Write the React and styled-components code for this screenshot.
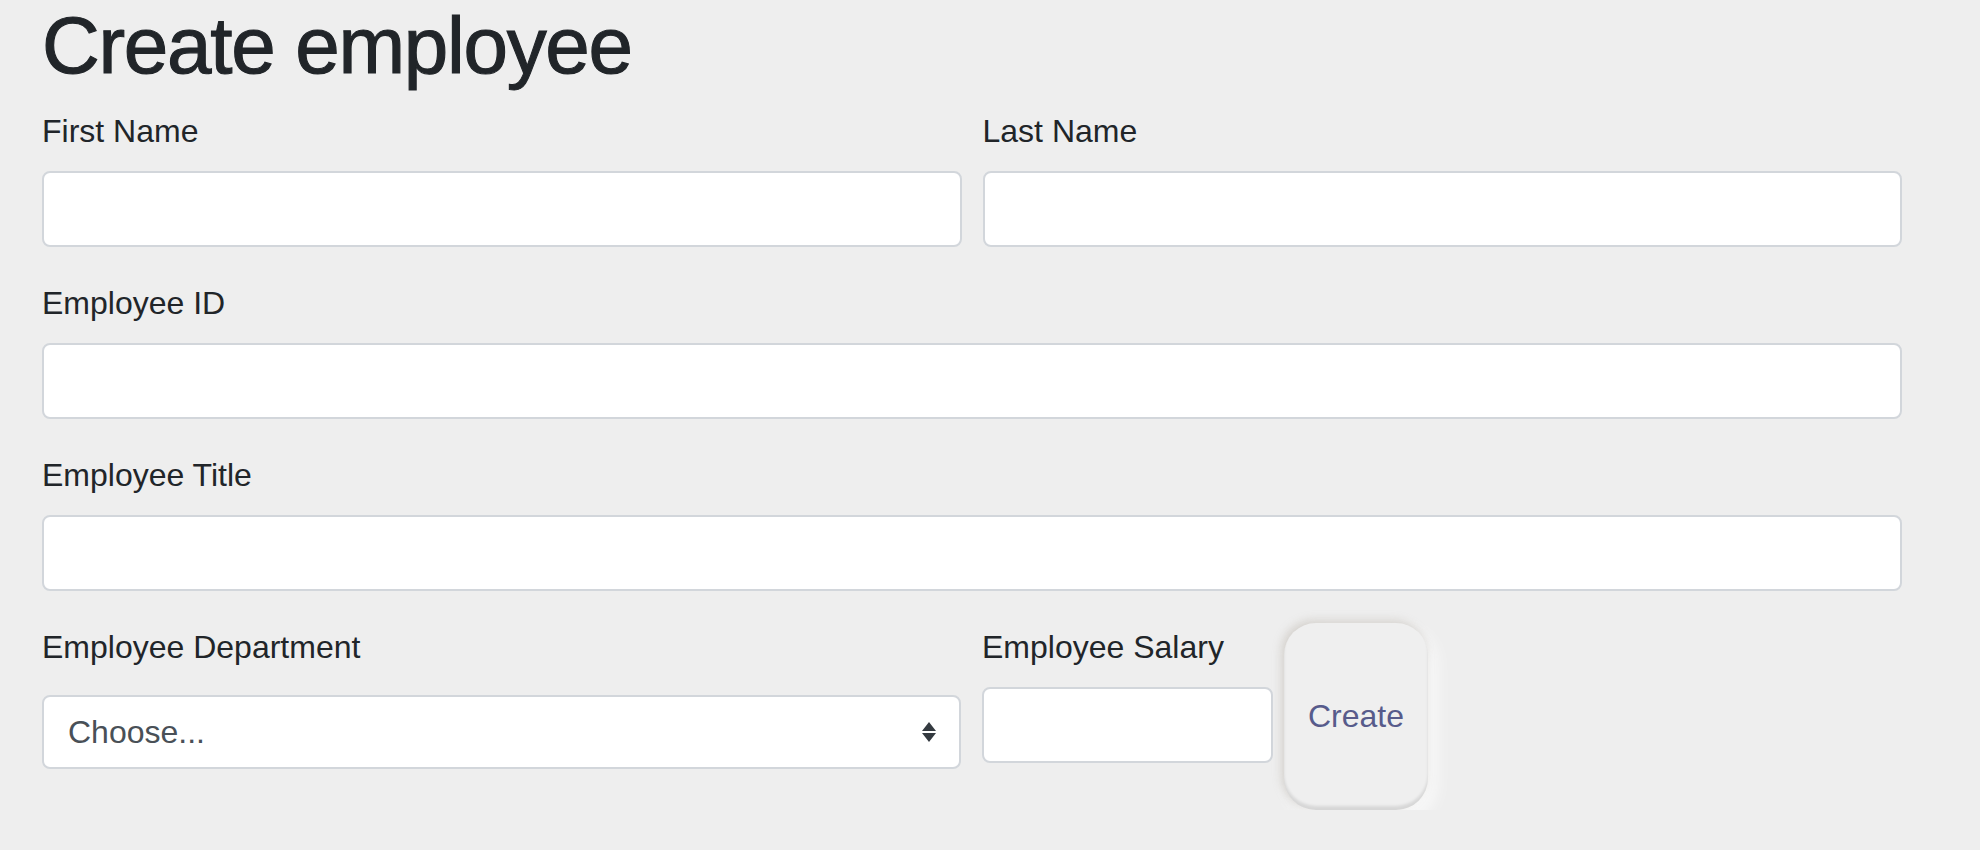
import React from 'react'
import styled, { createGlobalStyle } from 'styled-components'

const GlobalStyle = createGlobalStyle`
  html, body {
    margin: 0;
    padding: 0;
    background: #eeeeee;
  }
  body {
    font-family: "Liberation Sans", Arial, sans-serif;
    color: #212529;
  }
  * { box-sizing: border-box; }
`

function Field({ label, children, width }) {
  return (
    <Group $width={width}>
      <Label>{label}</Label>
      {children}
    </Group>
  )
}

function App() {
  return (
    <>
      <GlobalStyle />
      <Page>
        <Title>Create employee</Title>
        <TwoCols>
          <Field label='First Name'><Input type='text' /></Field>
          <Field label='Last Name'><Input type='text' /></Field>
        </TwoCols>
        <Field label='Employee ID'><Input type='text' /></Field>
        <Field label='Employee Title'><Input type='text' /></Field>
        <BottomRow>
          <Field label='Employee Department' width='919px'>
            <SelectWrap>
              <Select defaultValue=''>
                <option value=''>Choose...</option>
                <option value='eng'>Engineering</option>
                <option value='sales'>Sales</option>
                <option value='hr'>HR</option>
              </Select>
              <Arrow viewBox='0 0 14 20' width='14' height='20'>
                <path d='M7 0 L14 9 L0 9 Z M0 11 L14 11 L7 20 Z' fill='#343a40' />
              </Arrow>
            </SelectWrap>
          </Field>
          <Field label='Employee Salary' width='291px'>
            <Input type='text' />
          </Field>
          <CreateButton type='button'>Create</CreateButton>
        </BottomRow>
      </Page>
    </>
  )
}

export default App

const Page = styled.div`
  width: 1902px;
  padding-left: 42px;
`

const Title = styled.h1`
  margin: 0 0 15px;
  font-size: 80px;
  line-height: 92px;
  font-weight: 400;
  letter-spacing: -1.3px;
  color: #212529;
  -webkit-text-stroke: 1.1px #212529;
`

const Group = styled.div`
  display: flex;
  flex-direction: column;
  margin-bottom: 32px;
  ${p => p.$width && `width: ${p.$width}; flex-shrink: 0;`}
`

const Label = styled.label`
  display: block;
  font-size: 32px;
  line-height: 48px;
  margin-bottom: 16px;
  color: #212529;
`

const Input = styled.input`
  display: block;
  width: 100%;
  height: 76px;
  padding: 12px 24px;
  font-family: inherit;
  font-size: 32px;
  color: #495057;
  background: #fff;
  border: 2px solid #d2d6db;
  border-radius: 8px;
  outline: none;
`

const TwoCols = styled.div`
  display: grid;
  grid-template-columns: 1fr 1fr;
  column-gap: 21px;
`

const BottomRow = styled.div`
  display: flex;
  align-items: flex-start;
  gap: 21px;
`

const SelectWrap = styled.div`
  position: relative;
  margin-top: 8px;
`

const Select = styled.select`
  display: block;
  width: 100%;
  height: 74px;
  padding: 0 60px 0 24px;
  appearance: none;
  -webkit-appearance: none;
  font-family: inherit;
  font-size: 32px;
  color: #495057;
  background: #fff;
  border: 2px solid #d2d6db;
  border-radius: 8px;
  outline: none;
`

const Arrow = styled.svg`
  position: absolute;
  right: 25px;
  top: 27px;
  pointer-events: none;
`

const CreateButton = styled.button`
  margin-left: -10px;
  width: 144px;
  height: 187px;
  flex-shrink: 0;
  border: none;
  border-radius: 32px;
  background: #efefef;
  font-family: inherit;
  font-size: 32px;
  color: #575b8b;
  cursor: pointer;
  box-shadow:
    inset 0 -4px 3px rgba(0, 0, 0, 0.10),
    -3px -3px 8px rgba(170, 160, 150, 0.35),
    6px 8px 18px rgba(255, 255, 255, 0.95),
    2px 4px 10px rgba(0, 0, 0, 0.06);
`
